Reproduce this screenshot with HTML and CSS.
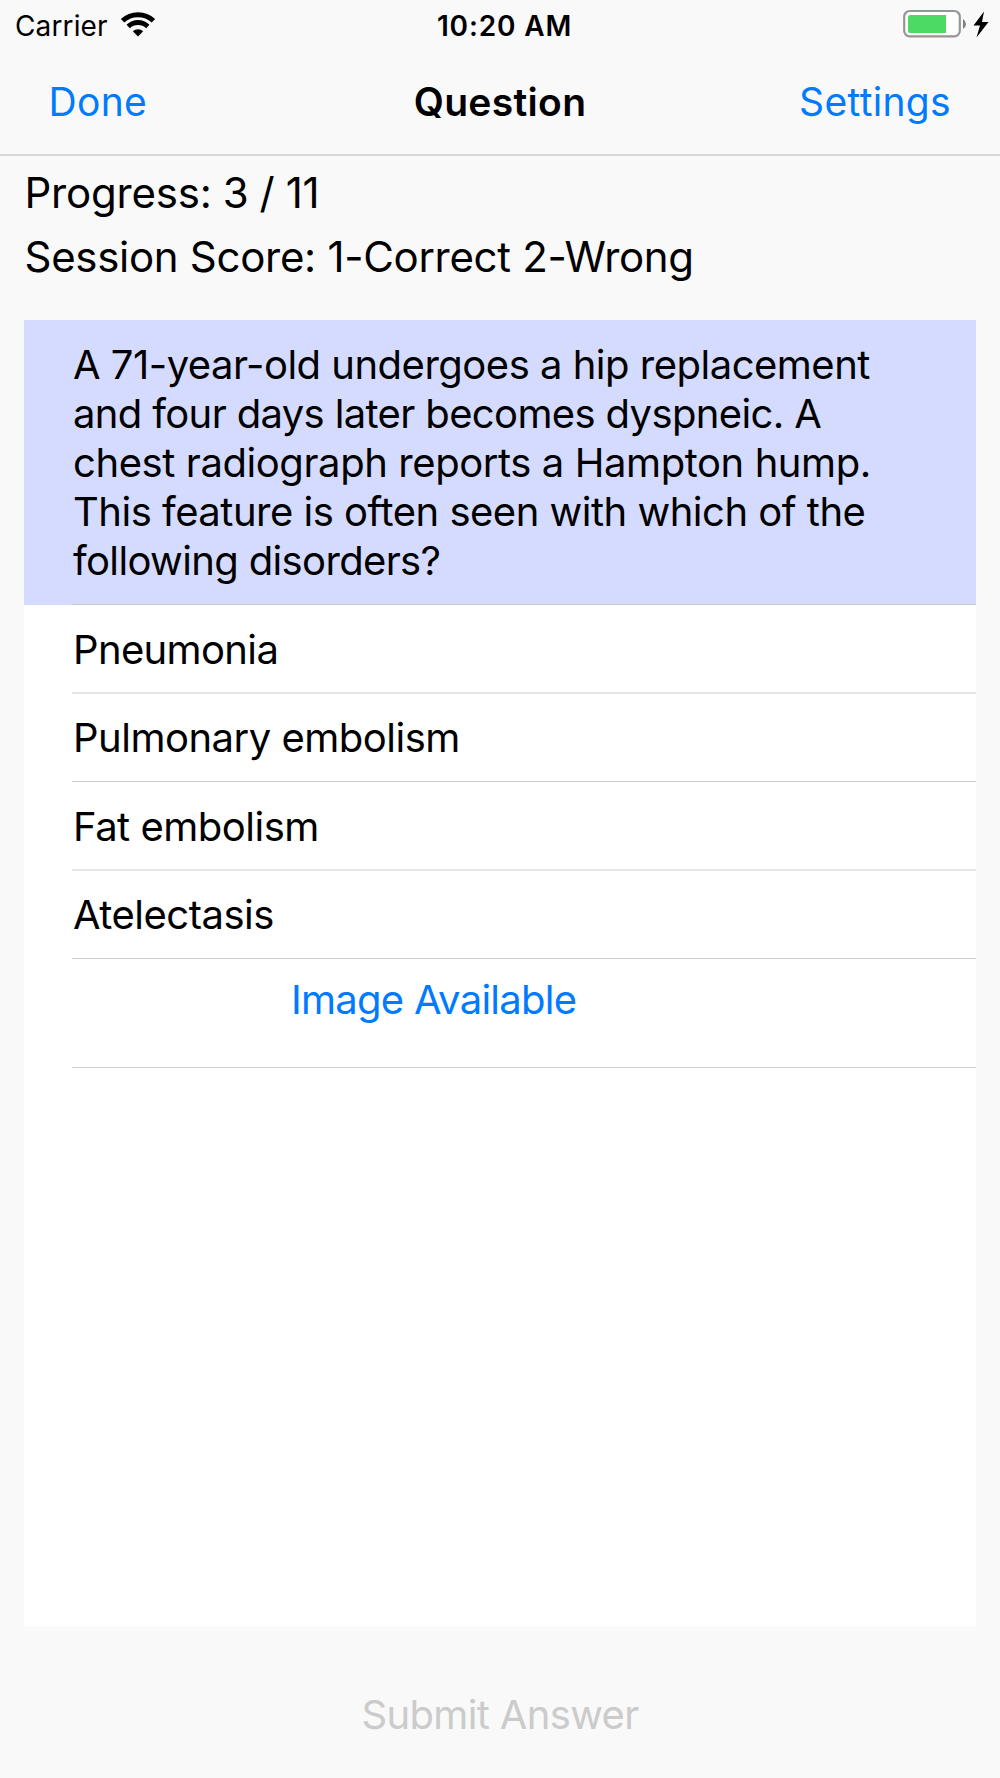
FILE: index.html
```html
<!DOCTYPE html>

<html lang="en">
    <head>
        <title>Question</title>
        <meta charset="utf-8" />
        <meta name="viewport" content="width=device-width, initial-scale=1">
        <link rel="stylesheet" href="styles.css">
    </head>

    <body>
        <div id="screen">
            <!-- Status bar -->
            <div class="status">
                <div class="carrier">
                    <span>Carrier</span>
                    <svg class="wifi" width="36" height="26" viewBox="0 0 36 26">
                        <path d="M2.6 9.8A22.5 22.5 0 0 1 33.4 9.8" fill="none" stroke="#000" stroke-width="5" />
                        <path d="M8.2 15.5A14 14 0 0 1 27.8 15.5" fill="none" stroke="#000" stroke-width="4.8" />
                        <path d="M12.8 20.2A7.6 7.6 0 0 1 23.2 20.2L18 25.6Z" />
                    </svg>
                </div>
                <div class="time">10:20 AM</div>
                <div class="power">
                    <svg width="88" height="30" viewBox="0 0 88 30">
                        <rect x="1.2" y="2" width="55.6" height="25.4" rx="5.6" fill="#fff" stroke="#959595" stroke-width="2.2" />
                        <path d="M7.5 6H43V24H7.5A2.5 2.5 0 0 1 5 21.5V8.5A2.5 2.5 0 0 1 7.5 6Z" fill="#4cd964" />
                        <path d="M60 10Q63 12 63 15T60 20Z" fill="#808080" />
                        <path d="M81 2.5L70.5 16.5H77L73.5 28.5L85.5 13H79Z" />
                    </svg>
                </div>
            </div>

            <!-- Navigation bar -->
            <header class="nav">
                <a class="done">Done</a>
                <h1>Question</h1>
                <a class="settings">Settings</a>
            </header>

            <div class="score">
                <div class="progress">Progress: 3 / 11</div>
                <div class="session">Session Score: 1-Correct 2-Wrong</div>
            </div>

            <main>
                <div class="question">
                    <p>
                        <span>A 71-year-old undergoes a hip replacement</span><br />
                        <span class="tight">and four days later becomes dyspneic. A</span><br />
                        <span class="loose">chest radiograph reports a Hampton hump.</span><br />
                        <span>This feature is often seen with which of the</span><br />
                        <span class="tight">following disorders?</span>
                    </p>
                </div>
                <div class="row soft tight">Pneumonia</div>
                <div class="row">Pulmonary embolism</div>
                <div class="row soft">Fat embolism</div>
                <div class="row">Atelectasis</div>
                <div class="row image"><a>Image Available</a></div>
            </main>

            <footer>
                <button class="submit" disabled>Submit Answer</button>
            </footer>
        </div>
    </body>
</html>
```
FILE: styles.css
```css
body {
    margin: 0;
    background-color: #f9f9f9;
    color: #000000;
    font-family: Inter, "Liberation Sans", sans-serif;
}

#screen {
    display: flex;
    flex-direction: column;
    width: 1000px;
    height: 1778px;
}

/* status bar */
.status {
    display: grid;
    grid-template-columns: 1fr auto 1fr;
    align-items: center;
    height: 51px;
    font-size: 28px;
}

.carrier {
    display: flex;
    align-items: center;
    gap: 12px;
    padding-left: 15px;
    letter-spacing: 0.13px;
}

.wifi {
    margin-top: -3px;
}

.time {
    padding-left: 9px;
    font-weight: 600;
    letter-spacing: 0.85px;
}

.power {
    display: flex;
    justify-content: flex-end;
    padding-right: 9px;
    margin-top: -3px;
}

/* navigation bar */
.nav {
    display: grid;
    grid-template-columns: 1fr auto 1fr;
    align-items: center;
    height: 105px;
    padding-bottom: 2px;
    box-sizing: border-box;
    border-bottom: 2px solid #d8d8d8;
    font-size: 39px;
    letter-spacing: 0.32px;
}

.nav h1 {
    margin: 0;
    font-size: 39px;
    font-weight: 600;
}

.nav a, .image a {
    color: #007aff;
}

.done {
    padding-left: 48.5px;
}

.settings {
    padding-right: 49px;
    text-align: right;
}

.score {
    height: 164px;
    padding-left: 24.5px;
    box-sizing: border-box;
    font-size: 42px;
    line-height: 64px;
    padding-top: 5px;
    letter-spacing: -0.3px;
}

.progress {
    letter-spacing: -0.2px;
    word-spacing: -0.5px;
}

/* question and answers */
main {
    height: 1306px;
    margin: 0 24px;
    background-color: #ffffff;
    font-size: 40px;
    letter-spacing: -0.5px;
}

.question {
    height: 285px;
    padding-left: 48px;
    box-sizing: border-box;
    background-color: #d4dbff;
}

.question p {
    height: 285px;
    margin: 0;
    padding: 20px 0 0 1px;
    box-sizing: border-box;
    border-bottom: 1px solid #c6c8d2;
    line-height: 49px;
    white-space: nowrap;
}

.tight {
    letter-spacing: -0.64px;
}

.loose {
    letter-spacing: -0.42px;
}

.row {
    height: 88px;
    margin-left: 48px;
    padding-left: 1px;
    box-sizing: border-box;
    border-bottom: 1px solid #cfcfcf;
    line-height: 88px;
}

.soft {
    height: 89px;
    border-bottom: 2px solid #e6e6e6;
    line-height: 90px;
}

.image {
    height: 109px;
    padding-left: 219px;
    line-height: 82px;
    letter-spacing: -0.73px;
}

footer {
    display: flex;
    flex: 1;
    align-items: center;
    justify-content: center;
    padding-top: 25px;
}

.submit {
    padding: 0;
    border: none;
    background: none;
    color: #cbcbcb;
    font-family: inherit;
    font-size: 40px;
    letter-spacing: -0.65px;
}
```
